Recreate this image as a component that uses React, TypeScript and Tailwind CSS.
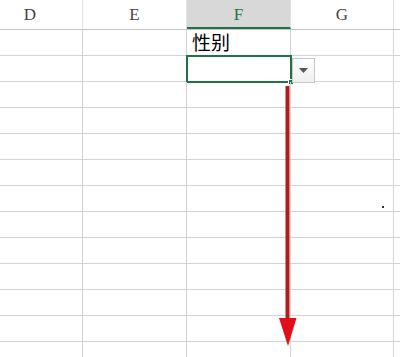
import React from 'react';

const cols = [
    {name: 'D', width: 'w-[105px]'},
    {name: 'E', width: 'w-[104px]'},
    {name: 'F', width: 'w-[104px]'},
    {name: 'G', width: 'w-[103px]'},
    {name: '', width: 'w-[40px]'},
];

const rowCount = 13;

const DropdownButton = () => (
    <div className="absolute -right-[25px] top-[1px] flex h-[25px] w-[23px] items-center justify-center border border-[#c6c6c6] bg-gradient-to-b from-white to-[#f0f0f0]">
        <svg width="9" height="5" viewBox="0 0 9 5">
            <path d="M0 0 H9 L4.5 5 Z" fill="#555"/>
        </svg>
    </div>
);

const RedArrow = () => (
    <svg className="absolute left-[276px] top-[86px]" width="24" height="262" viewBox="0 0 24 262">
        <rect x="9.5" y="0" width="4" height="236" fill="#b11d1d"/>
        <path d="M3 232 H20.5 L12 260 Z" fill="#e0101a"/>
    </svg>
);

// the active cell with its outline, fill handle and list button
const ActiveCell = () => (
    <div className="absolute -left-[1px] -top-[1px] h-[28px] w-[106px] border-2 border-[#217346]">
        <div className="absolute -bottom-[4px] -right-[4px] h-[6px] w-[6px] border border-white bg-[#217346]"/>
        <DropdownButton/>
    </div>
);

export default function App() {
    return (
        <div className="relative h-[357px] w-[400px] overflow-hidden bg-white" style={{fontFamily: '"Liberation Serif", serif'}}>
            <div className="-ml-[22px] flex flex-col">
                <div className="flex h-[30px] border-b border-[#c4c4c4] bg-white">
                    {cols.map((col) => (
                        <div
                            className={`flex shrink-0 items-center justify-center border-r border-[#e2e2e2] text-[17px] ${col.width} ${col.name === 'F' ? 'border-b-2 border-b-[#217346] bg-[#d8d8d8] pt-[2px] text-[#217346]' : 'text-[#444]'}`}
                            key={col.name || 'x'}
                        >
                            {col.name}
                        </div>
                    ))}
                </div>

                {Array.from({length: rowCount}).map((_, row) => (
                    <div className="flex h-[26px] border-b border-[#d3d3d3]" key={row}>
                        {cols.map((col) => (
                            <div className={`relative shrink-0 border-r border-[#d3d3d3] ${col.width}`} key={col.name || 'x'}>
                                {row === 0 && col.name === 'F' && (
                                    <span className="ml-[5px] block text-[19px] leading-[24px] text-black" style={{fontFamily: '"Noto Sans CJK SC", sans-serif'}}>性别</span>
                                )}
                                {row === 1 && col.name === 'F' && <ActiveCell/>}
                            </div>
                        ))}
                    </div>
                ))}
            </div>

            <RedArrow/>
            <div className="absolute left-[382px] top-[206px] h-[2px] w-[2px] bg-[#333]"/>
        </div>
    );
}
